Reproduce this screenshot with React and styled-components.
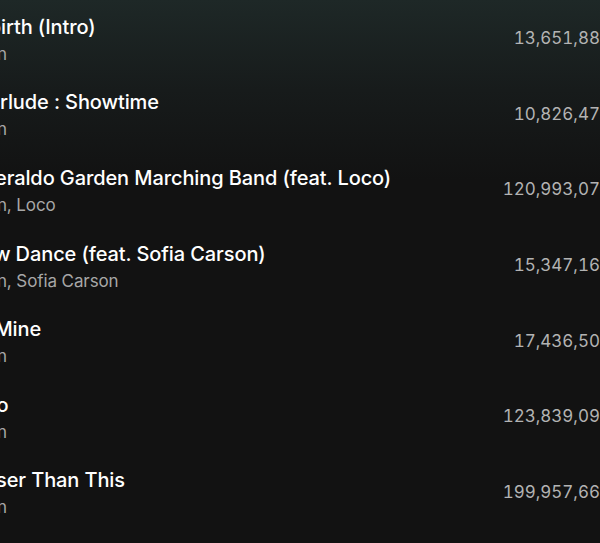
import styled, { createGlobalStyle } from "styled-components";

const GlobalStyle = createGlobalStyle`
  html, body {
    margin: 0;
    padding: 0;
    background: #121212;
    overflow: hidden;
  }
  body {
    font-family: Inter, "Noto Sans", sans-serif;
    -webkit-font-smoothing: antialiased;
  }
`;

const Page = styled.div`
  width: 600px;
  height: 543px;
  overflow: hidden;
  background: linear-gradient(180deg, #1e2827 0px, #171b1b 90px, #121212 180px);
`;

// the list is wider than the window, the title start and the plays end are cut off
const TrackList = styled.div`
  margin: 0 -11px 0 -35.5px;
  padding-top: 2px;
`;

const Row = styled.div`
  display: grid;
  grid-template-columns: 1fr auto;
  align-items: center;
  height: 75.6px;
`;

const Info = styled.div`
  display: flex;
  flex-direction: column;
  gap: 2px;
  min-width: 0;
`;

const Title = styled.div`
  color: #ffffff;
  font-size: 20px;
  font-weight: 500;
  line-height: 26px;
  letter-spacing: -0.1px;
  white-space: nowrap;
`;

const Artist = styled.div`
  color: #a7a7a7;
  font-size: 17px;
  line-height: 24px;
  letter-spacing: -0.1px;
  white-space: nowrap;
`;

const Plays = styled.div`
  color: #b3b3b3;
  font-size: 17px;
  font-variant-numeric: tabular-nums;
  text-align: right;
  padding-bottom: 3px;
`;

const tracks = [
  { title: "Rebirth (Intro)", artists: "Jimin", plays: "13,651,889" },
  { title: "Interlude : Showtime", artists: "Jimin", plays: "10,826,473" },
  { title: "Smeraldo Garden Marching Band (feat. Loco)", artists: "Jimin, Loco", plays: "120,993,076" },
  { title: "Slow Dance (feat. Sofia Carson)", artists: "Jimin, Sofia Carson", plays: "15,347,162" },
  { title: "Be Mine", artists: "Jimin", plays: "17,436,505" },
  { title: "Who", artists: "Jimin", plays: "123,839,094" },
  { title: "Closer Than This", artists: "Jimin", plays: "199,957,668" },
];

export default function App() {
  return (
    <Page>
      <GlobalStyle />
      <TrackList>
        {tracks.map((t) => (
          <Row key={t.title}>
            <Info>
              <Title>{t.title}</Title>
              <Artist>{t.artists}</Artist>
            </Info>
            <Plays>{t.plays}</Plays>
          </Row>
        ))}
      </TrackList>
    </Page>
  );
}
